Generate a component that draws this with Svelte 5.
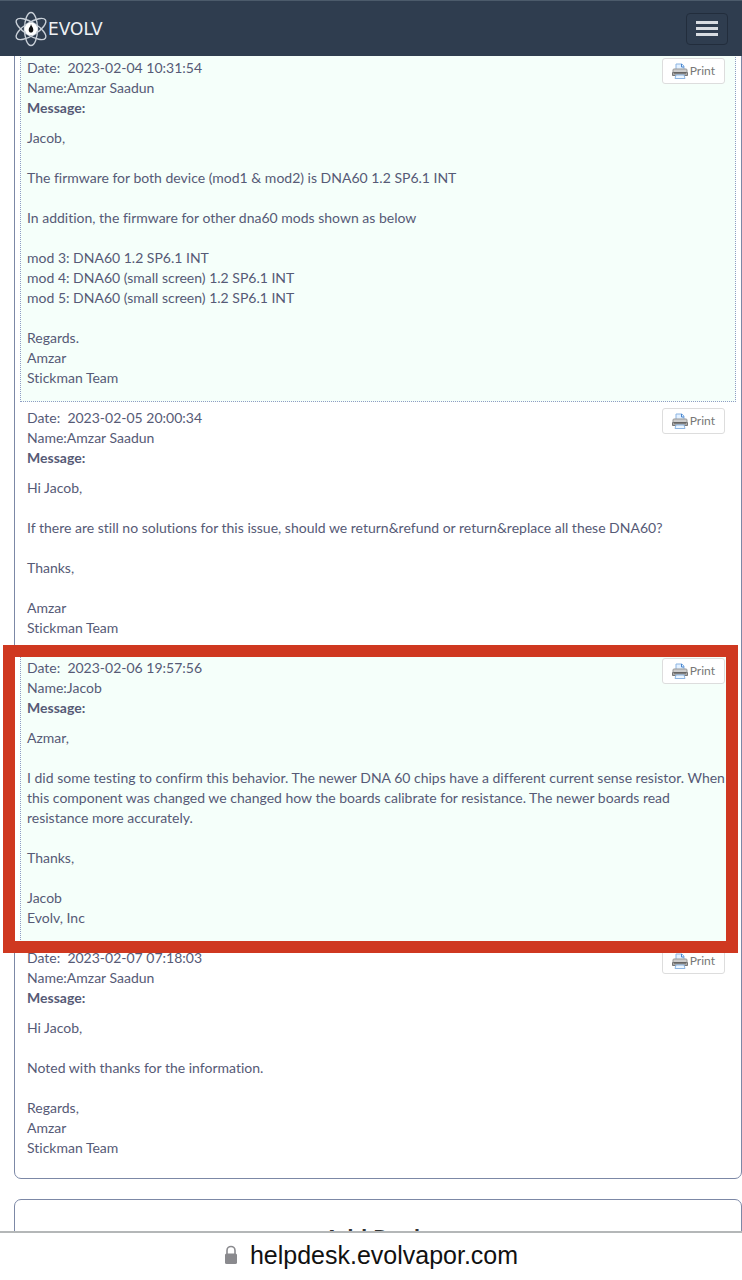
<script>
  const posts = [
    {
      date: '2023-02-04 10:31:54',
      name: 'Amzar Saadun',
      shaded: true,
      message: `Jacob,

The firmware for both device (mod1 & mod2) is DNA60 1.2 SP6.1 INT

In addition, the firmware for other dna60 mods shown as below

mod 3: DNA60 1.2 SP6.1 INT
mod 4: DNA60 (small screen) 1.2 SP6.1 INT
mod 5: DNA60 (small screen) 1.2 SP6.1 INT

Regards.
Amzar
Stickman Team`
    },
    {
      date: '2023-02-05 20:00:34',
      name: 'Amzar Saadun',
      message: `Hi Jacob,

If there are still no solutions for this issue, should we return&refund or return&replace all these DNA60?

Thanks,

Amzar
Stickman Team`
    },
    {
      date: '2023-02-06 19:57:56',
      name: 'Jacob',
      shaded: true,
      marked: true,
      message: `Azmar,

I did some testing to confirm this behavior. The newer DNA 60 chips have a different current sense resistor. When this component was changed we changed how the boards calibrate for resistance. The newer boards read resistance more accurately.

Thanks,

Jacob
Evolv, Inc`
    },
    {
      date: '2023-02-07 07:18:03',
      name: 'Amzar Saadun',
      message: `Hi Jacob,

Noted with thanks for the information.

Regards,
Amzar
Stickman Team`
    }
  ];
</script>

<div class="app">
  <header>
    <a class="brand" href="/" aria-label="Evolv">
      <svg width="34" height="36" viewBox="0 0 34 36" aria-hidden="true">
        <g fill="none" stroke="#c9d0d8" stroke-width="1.4">
          <ellipse cx="17" cy="18" rx="6.5" ry="16.5" />
          <ellipse cx="17" cy="18" rx="6.5" ry="17" transform="rotate(58 17 18)" />
          <ellipse cx="17" cy="18" rx="6.5" ry="17" transform="rotate(-58 17 18)" />
        </g>
        <circle cx="17" cy="18" r="6.5" fill="#fff" />
        <path d="M17 13c.4 2 2.300 3.200 2.300 5.800a2.300 2.800 0 0 1-4.600 0C14.700 16.500 16.800 15.500 17 13z" fill="#111" />
      </svg>
      <span>EVOLV</span>
    </a>
    <button class="menu" aria-label="Toggle navigation">
      <i></i><i></i><i></i>
    </button>
  </header>

  <main>
    <section class="card thread">
      {#each posts as post}
        <article class="post" class:shaded={post.shaded} class:marked={post.marked}>
          <div class="top">
            <div>
              <div>Date:&nbsp; {post.date}</div>
              <div>Name:{post.name}</div>
              <strong>Message:</strong>
            </div>
            <button class="print">
              <svg width="16" height="16" viewBox="0 0 16 16" aria-hidden="true">
                <path d="M4 7V1h6l2 2v4z" fill="#e4f1ff" stroke="#8bb4e2" />
                <path d="M9.500 1v3H12" fill="none" stroke="#4a86cf" />
                <rect x="1" y="6" width="14" height="4" rx="1" fill="#ccc" stroke="#999" />
                <path d="M.5 9.500h15v3h-15z" fill="#aaa" stroke="#777" />
                <path d="M2 10h12" stroke="#555" />
                <path d="M4 12h8l1 3.500H3z" fill="#edf6ff" stroke="#8bb4e2" />
              </svg>
              Print
            </button>
          </div>
          <p>{post.message}</p>
        </article>
      {/each}
    </section>

    <section class="card reply">
      <h2>Add Reply</h2>
    </section>
  </main>

  <footer>
    <svg width="14" height="20" viewBox="0 0 14 20" aria-hidden="true">
      <path d="M3 9V5.500a4 4 0 0 1 8 0V9" fill="none" stroke="#8a8a8e" stroke-width="1.600" />
      <rect x="1" y="8.500" width="12" height="10.500" rx="1.600" fill="#8a8a8e" />
    </svg>
    <span>helpdesk.evolvapor.com</span>
  </footer>
</div>

<style>
  :global(body) {
    margin: 0;
    background: #fff;
  }
  .app {
    display: flex;
    flex-direction: column;
    height: 100vh;
    color: #565a76;
    font: 14px/20px Lato, sans-serif;
    font-variant-ligatures: none;
  }
  header {
    flex: none;
    display: flex;
    align-items: center;
    justify-content: space-between;
    box-sizing: border-box;
    height: 56px;
    padding: 0 14px;
    background: #2f3d4f;
    border-top: 1px solid #4c5b6b;
    z-index: 1;
  }
  .brand {
    display: flex;
    align-items: center;
    color: #eef1f4;
    font: 17px/20px "DejaVu Sans", sans-serif;
    text-decoration: none;
  }
  .menu {
    display: flex;
    flex-direction: column;
    align-items: center;
    justify-content: center;
    gap: 3px;
    width: 42px;
    height: 32px;
    padding: 0;
    background: none;
    border: 1px solid #222d3c;
    border-radius: 4px;
  }
  .menu i {
    width: 22px;
    height: 3px;
    background: #d8dce1;
  }
  main {
    flex: 1;
    min-height: 0;
    overflow: hidden;
    padding-left: 14px;
  }
  .card {
    border: 1px solid #7c88a6;
    border-radius: 7px;
  }
  .thread {
    margin: -10px 0 20px;
    padding: 5px 5px 6px;
  }
  .post {
    position: relative;
    padding: 5px 10px 13px 6px;
    border: 1px solid transparent;
  }
  .shaded {
    background: #f5fffa;
    border: 1px dotted #8f9cc4;
  }
  /* red frame laid over the post and its neighbours' edges */
  .marked::after {
    content: '';
    position: absolute;
    z-index: 1;
    inset: -8px -3px -12px -18px;
    border: 12px solid #cf3820;
    pointer-events: none;
  }
  .top {
    display: flex;
    align-items: flex-start;
    justify-content: space-between;
    margin-bottom: 10px;
  }
  strong {
    display: block;
  }
  p {
    margin: 0 -2px 0 0;
    white-space: pre-wrap;
  }
  .print {
    display: flex;
    align-items: center;
    gap: 2px;
    height: 26px;
    padding: 0 9px;
    background: #fff;
    border: 1px solid #ddd;
    border-radius: 3px;
    color: #777;
    font: 12px/16px Lato, sans-serif;
  }
  .reply {
    padding: 19px 0;
  }
  h2 {
    margin: 0;
    color: #333;
    font-size: 24px;
    line-height: 40px;
    text-align: center;
  }
  footer {
    flex: none;
    display: flex;
    align-items: center;
    justify-content: center;
    gap: 12px;
    box-sizing: border-box;
    height: 49px;
    padding-bottom: 4px;
    background: #fff;
    border-top: 2px solid #b4b7b8;
    color: #111;
    font: 25px/30px "Liberation Sans", sans-serif;
  }
</style>
